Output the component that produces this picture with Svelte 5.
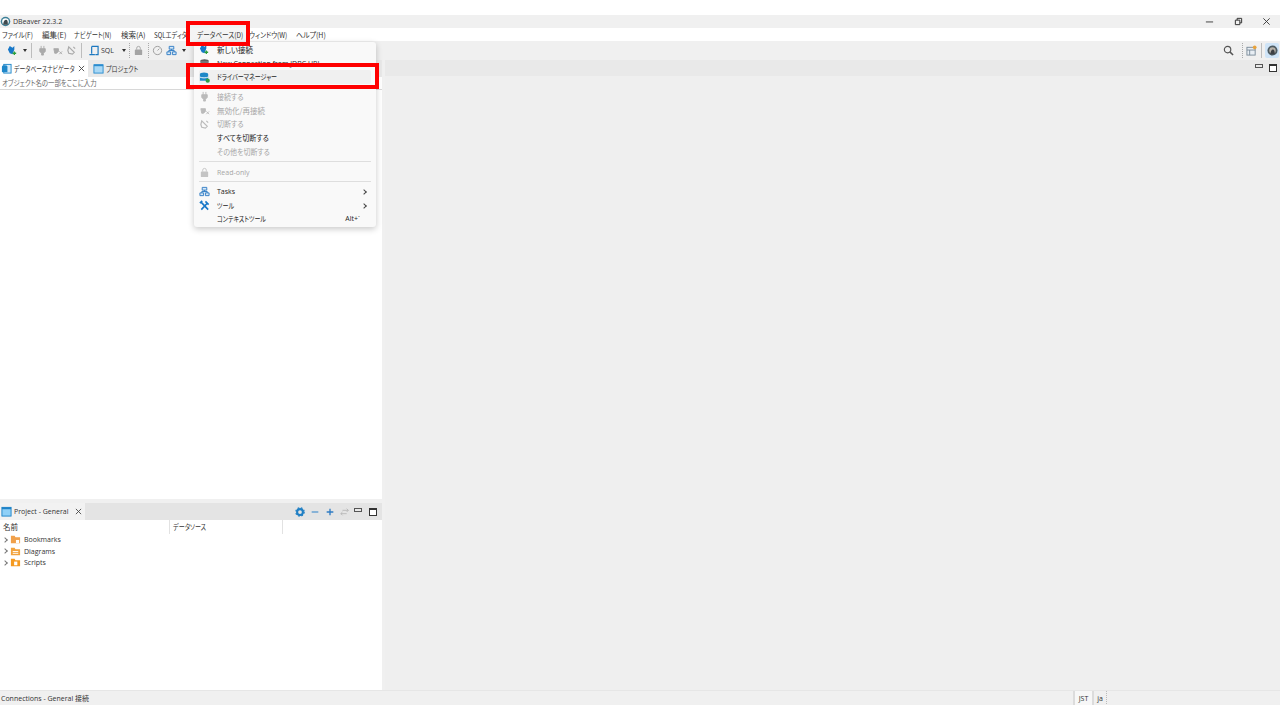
<script>
  const menus = [
    { t: 'ファイル(F)', w: 40, s: 0.88 }, { t: '編集(E)', w: 32, s: 1 }, { t: 'ナビゲート(N)', w: 47, s: 0.83 },
    { t: '検索(A)', w: 33, s: 1 }, { t: 'SQLエディタ(S)', w: 43, s: 0.82 }, { t: 'データベース(D)', w: 52, s: 0.88, on: true },
    { t: 'ウィンドウ(W)', w: 47, s: 0.88 }, { t: 'ヘルプ(H)', w: 40, s: 0.93 }
  ];
</script>

<div class="page">
  <div class="blank-top"></div>
  <header class="title">
    <div class="title-left">
      <svg class="logo" viewBox="0 0 12 12"><circle cx="6" cy="6" r="5.2" fill="#3d7f97"/><circle cx="6" cy="6" r="3.6" fill="#fff"/><path d="M3.4 9.6 C3.6 6 5 4 6.6 4 C8 4 8.6 5.4 8.6 9.6Z" fill="#3e4a4f"/></svg>
      <span>DBeaver 22.3.2</span>
    </div>
    <div class="win">
      <svg viewBox="0 0 10 10"><path d="M1 5.5H9" stroke="#333" fill="none"/></svg>
      <svg viewBox="0 0 10 10"><path d="M1.5 3.5h5v5h-5zM3.5 3.5V1.500h5v5h-2" stroke="#333" stroke-width="1.100" fill="none"/></svg>
      <svg viewBox="0 0 10 10"><path d="M1.5 1.5l7 7M8.5 1.5l-7 7" stroke="#333" fill="none"/></svg>
    </div>
  </header>
  <nav class="menubar">
    {#each menus as m}<span class="mi" class:on={m.on} style="width:{m.w}px"><span class="k" style="transform:scaleX({m.s})">{m.t}</span></span>{/each}
  </nav>
  <div class="toolbar">
    <div class="tools">
      <svg class="i" style="margin-left:7px" viewBox="0 0 12 12"><path d="M3 1l3 2 2-2v4l-2 5-3-1-2-4z" fill="#1878c8"/><path d="M8 7v4M6 9h4" stroke="#2b9f3c" stroke-width="1.400"/></svg>
      <span class="caret" style="margin-left:5px"></span>
      <span class="sep" style="margin-left:4px"></span>
      <svg class="i g" style="margin-left:5px" viewBox="0 0 12 12"><path d="M3 4h6v3l-2 2v2H5V9L3 7zM4.500 1v3M7.500 1v3" stroke="#aaa" fill="#aaa"/></svg>
      <svg class="i g" style="margin-left:4px" viewBox="0 0 12 12"><path d="M2 4h5v3l-2 2H3zM8 7l3 3M11 7l-3 3" stroke="#aaa" fill="#aaa"/></svg>
      <svg class="i g" style="margin-left:3px" viewBox="0 0 12 12"><path d="M3 2l6 6-2 2-4-1-1-3zM8 2l2 2" stroke="#aaa" fill="none" stroke-width="1.300"/></svg>
      <span class="sep" style="margin-left:4px"></span>
      <svg class="i" style="margin-left:6px" viewBox="0 0 12 12"><path d="M4 1.500h7v9H8M4 1.500v8M1.500 10.500h6" stroke="#1c78c0" stroke-width="1.300" fill="none"/></svg>
      <span class="sql">SQL</span>
      <span class="caret" style="margin-left:8px"></span>
      <span class="sep dot" style="margin-left:3px"></span>
      <svg class="i" style="margin-left:3px" viewBox="0 0 12 12"><rect x="2" y="5" width="8" height="6" rx="1" fill="#a4a4a4"/><path d="M4 5V3.500a2 2 0 0 1 4 0V5" stroke="#a4a4a4" fill="none"/></svg>
      <span class="sep dot" style="margin-left:4px"></span>
      <svg class="i" style="margin-left:3px" viewBox="0 0 12 12"><circle cx="6" cy="6" r="4.500" stroke="#999" fill="none"/><path d="M6 6l2-2" stroke="#999"/></svg>
      <svg class="i" style="margin-left:3px" viewBox="0 0 12 12"><path d="M3.500 1.500h5v3h-5zM1 7.500h4v3H1zM7 7.500h4v3H7zM6 4.500V6M3 7.500V6h6v1.500" stroke="#2f7cc4" fill="#d8e8f6"/></svg>
      <span class="caret" style="margin-left:5px"></span>
    </div>
    <div class="tools-right">
      <svg class="i" viewBox="0 0 12 12"><circle cx="5" cy="5" r="3.500" stroke="#555" stroke-width="1.300" fill="none"/><path d="M7.500 7.500L11 11" stroke="#555" stroke-width="1.600"/></svg>
      <span class="sep dot" style="margin-left:8px"></span>
      <svg class="i" style="margin-left:3px" viewBox="0 0 12 12"><rect x="1" y="2.500" width="9" height="8.500" fill="#e8eef4" stroke="#7a8b99"/><path d="M1 5.500h9M4 5.500V11" stroke="#7a8b99"/><circle cx="9.500" cy="2.500" r="2" fill="#e8a33c"/></svg>
      <span class="sep" style="margin-left:4px"></span>
      <span class="persp"><svg viewBox="0 0 12 12"><circle cx="6" cy="6" r="5.500" fill="#4d5a60"/><circle cx="6" cy="6" r="3.500" fill="#b7b2aa"/><path d="M3.500 10C4 7 5 5 6.500 5S8.500 7 8.500 10Z" fill="#3e4044"/></svg></span>
    </div>
  </div>

  <main class="workspace">
    <section class="left">
      <div class="pane nav">
        <div class="tabs">
          <div class="tab active">
            <svg class="i" viewBox="0 0 12 12"><rect x="3" y="1.500" width="8" height="9.500" fill="#d7ecfa" stroke="#1f87c9"/><ellipse cx="4" cy="4" rx="3" ry="1.500" fill="#1f87c9"/><rect x="1" y="4" width="6" height="6" fill="#1f87c9"/></svg>
            <span class="k n78 tab-k">データベースナビゲータ</span>
            <svg class="x" viewBox="0 0 8 8"><path d="M1 1l6 6M7 1l-6 6" stroke="#444" fill="none"/></svg>
          </div>
          <div class="tab plain">
            <svg class="i" viewBox="0 0 12 12"><rect x="1" y="2" width="10" height="9" fill="#a9d8f5" stroke="#2a8ccf"/><path d="M1 2.500h10" stroke="#2a8ccf" stroke-width="2"/></svg>
            <span class="k n80">プロジェクト</span>
          </div>
        </div>
        <div class="filter"><span class="k n85">オブジェクト名の一部をここに入力</span></div>
        <div class="nav-body"></div>
      </div>
      <div class="sash"></div>
      <div class="pane proj">
        <div class="tabs pt">
          <div class="tab active">
            <svg class="i" viewBox="0 0 12 12"><rect x="1" y="1.500" width="10" height="9.500" fill="#8fd0f7" stroke="#1f83c7"/><path d="M1 2.500h10" stroke="#1f83c7" stroke-width="2"/></svg>
            <span class="lat">Project - General</span>
            <svg class="x" viewBox="0 0 8 8"><path d="M1 1l6 6M7 1l-6 6" stroke="#444" fill="none"/></svg>
          </div>
          <div class="proj-tools">
            <svg class="i" viewBox="0 0 12 12"><circle cx="6" cy="6" r="3.500" fill="none" stroke="#1f7fc4" stroke-width="2.500"/><circle cx="6" cy="6" r="5" fill="none" stroke="#1f7fc4" stroke-width="1.500" stroke-dasharray="2 2"/></svg>
            <svg class="i" viewBox="0 0 12 12"><path d="M2 6h8" stroke="#5b9bd0" stroke-width="1.600"/></svg>
            <svg class="i" viewBox="0 0 12 12"><path d="M2 6h8M6 2v8" stroke="#2f7cc4" stroke-width="1.600"/></svg>
            <svg class="i" viewBox="0 0 12 12"><path d="M1 8h7M3 4h7M8 2l2 2-2 2M3 6L1 8l2 2" stroke="#b5b5b5" fill="none"/></svg>
            <span class="min tight"></span>
            <span class="max gapped"></span>
          </div>
        </div>
        <div class="cols"><span class="c1">名前</span><span class="c2"><span class="k n81">データソース</span></span><span class="c3"></span></div>
        <div class="tree">
          <div class="row"><span class="chev"></span><svg class="fold" viewBox="0 0 12 12"><path d="M1 2h4l1 1.500h5V10H1z" fill="#f0a04a"/><rect x="6.500" y="6.500" width="3.500" height="3.500" fill="#fff"/></svg><span class="lat">Bookmarks</span></div>
          <div class="row"><span class="chev"></span><svg class="fold" viewBox="0 0 12 12"><path d="M1 2h4l1 1.500h5V10H1z" fill="#f2a33d"/><path d="M3 6h6M3 8h6" stroke="#fff"/></svg><span class="lat">Diagrams</span></div>
          <div class="row"><span class="chev"></span><svg class="fold" viewBox="0 0 12 12"><path d="M1 2h4l1 1.500h5V10H1z" fill="#f59a20"/><rect x="4.500" y="5" width="3.500" height="4" fill="#fff"/></svg><span class="lat">Scripts</span></div>
        </div>
      </div>
    </section>
    <section class="right">
      <div class="right-head">
        <span class="min"></span>
        <span class="max"></span>
      </div>
    </section>
  </main>

  <footer class="status">
    <span class="lat status-text">Connections - General 接続</span>
    <span class="cell jst lat">JST</span>
    <span class="cell ja lat">ja</span>
    <span class="status-end"></span>
  </footer>
  <div class="blank-bottom"></div>

  <div class="menu">
    <div class="m-item"><svg class="mic" viewBox="0 0 12 12"><path d="M3 1l3 2 2-2v4l-2 5-3-1-2-4z" fill="#1878c8"/><path d="M8 7v4M6 9h4" stroke="#2b9f3c" stroke-width="1.400"/></svg><span>新しい接続</span></div>
    <div class="m-item"><svg class="mic" viewBox="0 0 12 12"><ellipse cx="6" cy="3" rx="4.500" ry="1.700" fill="#555"/><rect x="1.500" y="3" width="9" height="6" fill="#777"/></svg><span class="lat">New Connection from JDBC URL</span></div>
    <div class="m-item hot"><svg class="mic" viewBox="0 0 12 12"><ellipse cx="5.500" cy="2.500" rx="4.500" ry="2" fill="#1e88c7"/><rect x="1" y="2.500" width="9" height="7" fill="#1e88c7"/><path d="M1 5.500c2 1.200 7 1.200 9 0" stroke="#fff" fill="none"/><circle cx="9.500" cy="9.500" r="2.300" fill="#2f9e44"/></svg><span class="k n80">ドライバーマネージャー</span></div>
    <div class="m-gap"></div>
    <div class="m-item dis"><svg class="mic" viewBox="0 0 12 12"><path d="M3 4h6v3l-2 2v2H5V9L3 7zM4.500 1v3M7.500 1v3" stroke="#bbb" fill="#bbb"/></svg><span class="k n93">接続する</span></div>
    <div class="m-item dis"><svg class="mic" viewBox="0 0 12 12"><path d="M2 4h5v3l-2 2H3zM8 7l3 3M11 7l-3 3" stroke="#bbb" fill="#bbb"/></svg><span>無効化/再接続</span></div>
    <div class="m-item dis"><svg class="mic" viewBox="0 0 12 12"><path d="M3 2l6 6-2 2-4-1-1-3zM8 2l2 2" stroke="#bbb" fill="none" stroke-width="1.300"/></svg><span class="k n93">切断する</span></div>
    <div class="m-item"><span class="mic"></span><span class="k n93">すべてを切断する</span></div>
    <div class="m-item dis"><span class="mic"></span><span class="k n93">その他を切断する</span></div>
    <div class="m-line"></div>
    <div class="m-item dis"><svg class="mic" viewBox="0 0 12 12"><rect x="2" y="5" width="8" height="6" rx="1" fill="#c4c4c4"/><path d="M4 5V3.500a2 2 0 0 1 4 0V5" stroke="#c4c4c4" fill="none"/></svg><span class="lat">Read-only</span></div>
    <div class="m-line second"></div>
    <div class="m-item"><svg class="mic" viewBox="0 0 12 12"><path d="M3.500 1.500h5v3h-5zM1 7.500h4v3H1zM7 7.500h4v3H7zM6 4.500V6M3 7.500V6h6v1.500" stroke="#2f7cc4" fill="#d8e8f6"/></svg><span class="lat">Tasks</span><span class="arrow"></span></div>
    <div class="m-item"><svg class="mic" viewBox="0 0 12 12"><path d="M2.500 10.500L9 3.500M7 1.500l3.500 3.500M2 2l8 8.500M1 3.500L3.500 1" stroke="#1878c8" stroke-width="1.800" fill="none"/></svg><span class="k n80">ツール</span><span class="arrow"></span></div>
    <div class="m-item last"><span class="mic"></span><span class="k n80">コンテキストツール</span><span class="short lat">Alt+`</span></div>
  </div>

  <div class="mark mark-menu"></div>
  <div class="mark mark-item"></div>
</div>

<style>
  :global(body) { margin: 0; background: #fff; }
  .page {
    position: relative; width: 1280px; height: 720px; overflow: hidden; display: flex; flex-direction: column;
    font: 7.5px/1 "Noto Sans CJK JP", "Noto Sans", sans-serif; font-feature-settings: "palt"; color: #333; background: #fff;
    white-space: nowrap;
  }
  .lat { font-family: "Open Sans", "Noto Sans CJK JP", sans-serif; font-size: 7px; }
  svg { display: block; flex: none; }
  .blank-top, .blank-bottom { height: 15px; flex: none; }
  .k { display: inline-block; transform-origin: 0 50%; }
  .n78 { transform: scaleX(.78); }
  .n80 { transform: scaleX(.8); }
  .n81 { transform: scaleX(.81); }
  .n85 { transform: scaleX(.85); }
  .n93 { transform: scaleX(.93); }

  .title { height: 13px; flex: none; display: flex; align-items: center; justify-content: space-between; background: #f0f0f0; }
  .title-left { display: flex; align-items: center; gap: 2px; font-family: "Open Sans", sans-serif; font-size: 7px; }
  .logo { width: 11px; height: 11px; }
  .win { display: flex; gap: 19.300px; padding-right: 9px; }
  .win svg { width: 9px; height: 9px; }

  .menubar { height: 13px; flex: none; display: flex; align-items: center; padding-left: 2px; background: #fff; }
  .mi { flex: none; }
  .mi.on { position: relative; z-index: 1; margin-left: -7px; padding-left: 7px; background: #f4f4f4; line-height: 13px; }

  .toolbar { height: 19px; flex: none; display: flex; align-items: center; justify-content: space-between; background: #f0f0f0; }
  .tools, .tools-right { display: flex; align-items: center; }
  .tools-right { padding-right: 1px; }
  .i { width: 11px; height: 11px; }
  .caret { width: 0; height: 0; border: 2.500px solid transparent; border-top: 3px solid #333; border-bottom: 0; }
  .sep { width: 1px; height: 15px; background: #bdbdbd; }
  .dot { background: repeating-linear-gradient(#aaa 0 1px, transparent 1px 2px); }
  .sql { margin-left: 2px; font-size: 7px; font-family: "Open Sans", sans-serif; }
  .persp { margin-left: 3px; width: 14px; height: 15px; background: #cfe4f7; display: flex; align-items: center; justify-content: center; border-radius: 2px; }
  .persp svg { width: 11px; height: 11px; }

  .workspace { height: 630px; flex: none; display: flex; gap: 3px; background: #f0f0f0; }
  .left { width: 382px; flex: none; display: flex; flex-direction: column; background: #f0f0f0; }
  .pane { background: #fff; display: flex; flex-direction: column; }
  .nav { height: 439px; flex: none; }
  .sash { height: 4px; flex: none; }
  .proj { flex: 1; min-height: 0; }
  .tabs { height: 17px; flex: none; display: flex; background: #e9e9e9; align-items: stretch; }
  .tab { display: flex; align-items: center; gap: 2px; padding-left: 1px; }
  .tab.active { background: #fff; width: 88px; box-sizing: border-box; }
  .tab.plain { margin-left: 4px; }
  .tab-k { margin-right: -17px; }
  .pt { background: #e4e4e4; justify-content: space-between; }
  .pt .tab.active { width: 85px; background: #f2f2f2; }
  .x { width: 7px; height: 7px; margin-left: auto; margin-right: 3px; }
  .filter { height: 13px; flex: none; display: flex; align-items: center; padding-left: 2px; color: #6a6a6a; border-bottom: 1px solid #d8d8d8; box-sizing: border-box; }
  .nav-body { flex: 1; }

  .proj-tools { display: flex; align-items: center; gap: 5px; padding-right: 5px; }
  .proj-tools .i { width: 10px; height: 10px; }
  .min { width: 6px; height: 2px; border: 1px solid #555; background: #e8e8e8; margin-bottom: 4px; box-sizing: content-box; }
  .tight { margin-left: -1px; }
  .max { width: 6px; height: 5px; border: 1px solid #333; border-top-width: 2px; background: #fff; }
  .gapped { margin-left: 2px; }

  .cols { height: 14px; flex: none; display: flex; align-items: center; }
  .cols > span { height: 100%; display: flex; align-items: center; box-sizing: border-box; border-right: 1px solid #e2e2e2; padding-left: 3px; }
  .c1 { width: 170px; }
  .c2 { width: 113px; }
  .c3 { flex: 1; border-right: 0 !important; }
  .tree { display: flex; flex-direction: column; }
  .row { height: 11.500px; display: flex; align-items: center; }
  .chev { width: 3px; height: 3px; margin-left: 3px; border-top: 1px solid #777; border-right: 1px solid #777; transform: rotate(45deg); }
  .fold { width: 11px; height: 11px; margin-left: 3px; margin-right: 3px; }

  .right { flex: 1; display: flex; flex-direction: column; background: #efefef; }
  .right-head { height: 16px; flex: none; background: #e9e9e9; display: flex; align-items: center; justify-content: flex-end; gap: 6px; padding-right: 3px; }

  .status { height: 15px; flex: none; display: flex; align-items: center; background: #f0f0f0; border-top: 1px solid #e6e6e6; box-sizing: border-box; }
  .status-text { width: 1073px; padding-left: 1px; flex: none; box-sizing: border-box; }
  .cell { height: 100%; display: flex; align-items: center; justify-content: center; flex: none; border-left: 2px solid #dcdcdc; box-sizing: border-box; }
  .jst { width: 19px; background: #f7f7f7; }
  .ja { width: 14px; }
  .status-end { width: 1px; height: 100%; background: repeating-linear-gradient(#bbb 0 1px, transparent 1px 2px); }

  .menu {
    position: absolute; z-index: 2; left: 194px; top: 42px; width: 182px; height: 185px; box-sizing: border-box; padding: 1px 5px 0;
    background: #f9f9f9; border-radius: 3px; box-shadow: 0 2px 6px rgba(0, 0, 0, .22);
    display: flex; flex-direction: column;
  }
  .m-item { height: 13.700px; flex: none; display: flex; align-items: center; border-radius: 2px; color: #222; }
  .m-item.hot { background: #f0f0f0; }
  .m-item.dis { color: #a6a6a6; }
  .m-item.last { margin-top: -1px; }
  .mic { width: 11px; height: 11px; flex: none; margin-right: 7px; }
  .m-gap { height: 5.900px; flex: none; }
  .m-line { height: 1px; margin: 3px 0; flex: none; background: #dedede; }
  .m-line.second { margin-top: 2px; }
  .arrow { margin-left: auto; margin-right: 5px; width: 3px; height: 3px; border-top: 1px solid #444; border-right: 1px solid #444; transform: rotate(45deg); }
  .short { margin-left: auto; margin-right: 11px; }

  .mark { position: absolute; z-index: 3; border: 4px solid #f00; box-sizing: border-box; pointer-events: none; }
  .mark-menu { left: 186px; top: 21px; width: 64px; height: 25px; }
  .mark-item { left: 186px; top: 63px; width: 193px; height: 26px; }
</style>
